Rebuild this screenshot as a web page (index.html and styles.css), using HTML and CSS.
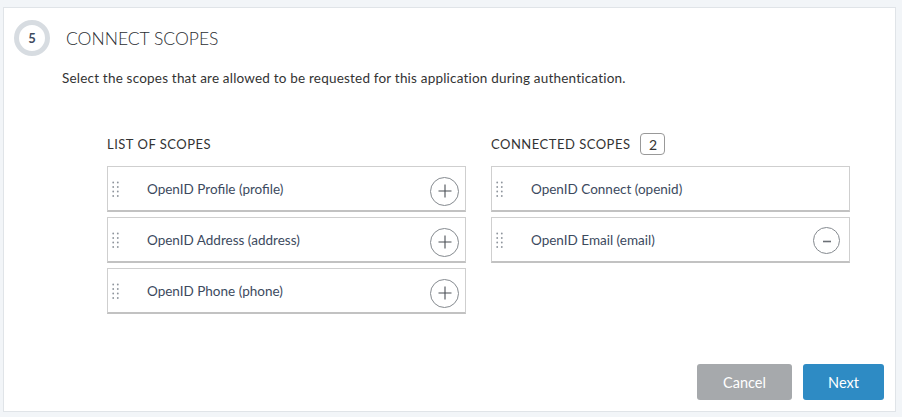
FILE: index.html
```html
<!DOCTYPE html>
<html>
<head>
<meta charset="utf-8">
<link rel="stylesheet" href="styles.css">
</head>
<body>
<div class="card">
  <div class="step-head">
    <div class="step-num">5</div>
    <h1 class="step-title">CONNECT SCOPES</h1>
  </div>
  <p class="desc">Select the scopes that are allowed to be requested for this application during authentication.</p>
  <div class="columns">
    <div class="col">
      <div class="col-head"><span class="col-label">LIST OF SCOPES</span></div>
      <div class="item">
        <svg class="handle" width="8" height="16" viewBox="0 0 8 16"><g fill="#8f959c"><circle cx="1.2" cy="1.5" r="0.9"/><circle cx="5.8" cy="1.5" r="0.9"/><circle cx="1.2" cy="6" r="0.9"/><circle cx="5.8" cy="6" r="0.9"/><circle cx="1.2" cy="10.5" r="0.9"/><circle cx="5.8" cy="10.5" r="0.9"/><circle cx="1.2" cy="15" r="0.9"/><circle cx="5.8" cy="15" r="0.9"/></g></svg>
        <span class="item-name">OpenID Profile (profile)</span>
        <span class="round-btn"><svg width="16" height="16" viewBox="0 0 16 16"><path d="M8 1.5v13M1.5 8h13" stroke="#4a4f55" stroke-width="1.1" fill="none"/></svg></span>
      </div>
      <div class="item">
        <svg class="handle" width="8" height="16" viewBox="0 0 8 16"><g fill="#8f959c"><circle cx="1.2" cy="1.5" r="0.9"/><circle cx="5.8" cy="1.5" r="0.9"/><circle cx="1.2" cy="6" r="0.9"/><circle cx="5.8" cy="6" r="0.9"/><circle cx="1.2" cy="10.5" r="0.9"/><circle cx="5.8" cy="10.5" r="0.9"/><circle cx="1.2" cy="15" r="0.9"/><circle cx="5.8" cy="15" r="0.9"/></g></svg>
        <span class="item-name">OpenID Address (address)</span>
        <span class="round-btn"><svg width="16" height="16" viewBox="0 0 16 16"><path d="M8 1.5v13M1.5 8h13" stroke="#4a4f55" stroke-width="1.1" fill="none"/></svg></span>
      </div>
      <div class="item">
        <svg class="handle" width="8" height="16" viewBox="0 0 8 16"><g fill="#8f959c"><circle cx="1.2" cy="1.5" r="0.9"/><circle cx="5.8" cy="1.5" r="0.9"/><circle cx="1.2" cy="6" r="0.9"/><circle cx="5.8" cy="6" r="0.9"/><circle cx="1.2" cy="10.5" r="0.9"/><circle cx="5.8" cy="10.5" r="0.9"/><circle cx="1.2" cy="15" r="0.9"/><circle cx="5.8" cy="15" r="0.9"/></g></svg>
        <span class="item-name">OpenID Phone (phone)</span>
        <span class="round-btn"><svg width="16" height="16" viewBox="0 0 16 16"><path d="M8 1.5v13M1.5 8h13" stroke="#4a4f55" stroke-width="1.1" fill="none"/></svg></span>
      </div>
    </div>
    <div class="col">
      <div class="col-head"><span class="col-label">CONNECTED SCOPES</span><span class="badge">2</span></div>
      <div class="item">
        <svg class="handle" width="8" height="16" viewBox="0 0 8 16"><g fill="#8f959c"><circle cx="1.2" cy="1.5" r="0.9"/><circle cx="5.8" cy="1.5" r="0.9"/><circle cx="1.2" cy="6" r="0.9"/><circle cx="5.8" cy="6" r="0.9"/><circle cx="1.2" cy="10.5" r="0.9"/><circle cx="5.8" cy="10.5" r="0.9"/><circle cx="1.2" cy="15" r="0.9"/><circle cx="5.8" cy="15" r="0.9"/></g></svg>
        <span class="item-name">OpenID Connect (openid)</span>
      </div>
      <div class="item">
        <svg class="handle" width="8" height="16" viewBox="0 0 8 16"><g fill="#8f959c"><circle cx="1.2" cy="1.5" r="0.9"/><circle cx="5.8" cy="1.5" r="0.9"/><circle cx="1.2" cy="6" r="0.9"/><circle cx="5.8" cy="6" r="0.9"/><circle cx="1.2" cy="10.5" r="0.9"/><circle cx="5.8" cy="10.5" r="0.9"/><circle cx="1.2" cy="15" r="0.9"/><circle cx="5.8" cy="15" r="0.9"/></g></svg>
        <span class="item-name">OpenID Email (email)</span>
        <span class="round-btn minus"><svg width="16" height="16" viewBox="0 0 16 16"><path d="M4 8.5h8" stroke="#6b7076" stroke-width="1.6" fill="none"/></svg></span>
      </div>
    </div>
  </div>
  <div class="footer">
    <button class="btn btn-cancel">Cancel</button>
    <button class="btn btn-next">Next</button>
  </div>
</div>
</body>
</html>
```

FILE: styles.css
```css
html, body {
  margin: 0;
  height: 100%;
}
body {
  background: #f2f5f8;
  padding: 7px 6px 5px 3px;
  box-sizing: border-box;
  font-family: "Lato", "Open Sans", sans-serif;
  color: #333;
}
.card {
  box-sizing: border-box;
  height: 100%;
  background: #fff;
  border: 1px solid #e0e4e8;
  display: flex;
  flex-direction: column;
  padding: 12px 10px 11px 10px;
}
.step-head {
  display: flex;
  align-items: center;
  gap: 16px;
}
.step-num {
  box-sizing: border-box;
  width: 36px;
  height: 36px;
  border-radius: 50%;
  border: 5px solid #d7dce1;
  display: flex;
  align-items: center;
  justify-content: center;
  font-size: 13px;
  font-weight: 700;
  color: #3e4b5e;
}
.step-title {
  margin: 0;
  font-size: 17.5px;
  font-weight: 300;
  color: #2a2e32;
}
.desc {
  margin: 14px 0 0 48px;
  font-size: 13.5px;
  line-height: 16px;
  letter-spacing: 0.2px;
  color: #333;
}
.columns {
  display: flex;
  gap: 25px;
  margin: 47px 0 0 93px;
}
.col {
  width: 359px;
  display: flex;
  flex-direction: column;
  gap: 5px;
}
.col-head {
  height: 22px;
  display: flex;
  align-items: center;
  gap: 10px;
  margin-bottom: 6px;
}
.col-label {
  font-size: 13px;
  letter-spacing: 0.5px;
  color: #333;
}
.badge {
  box-sizing: border-box;
  width: 25px;
  height: 22px;
  border: 1px solid #999;
  border-radius: 4px;
  display: flex;
  align-items: center;
  justify-content: center;
  font-size: 14px;
  color: #333;
}
.item {
  box-sizing: border-box;
  height: 46px;
  border: 1px solid #cfcfcf;
  border-bottom: 2px solid #c2c2c2;
  display: flex;
  align-items: center;
  padding: 0 6px 0 4px;
}
.handle {
  flex: none;
}
.item-name {
  margin-left: 27px;
  flex: 1;
  font-size: 13.5px;
  color: #3c4a5e;
}
.round-btn {
  box-sizing: border-box;
  width: 29px;
  height: 29px;
  border-radius: 50%;
  border: 1px solid #858a8f;
  display: flex;
  align-items: center;
  justify-content: center;
  margin-top: 5px;
}
.round-btn.minus {
  width: 27px;
  height: 27px;
  margin-right: 3px;
  margin-top: 2px;
}
.footer {
  margin-top: auto;
  display: flex;
  justify-content: flex-end;
  gap: 11px;
  margin-right: 1px;
}
.btn {
  height: 36px;
  border: none;
  border-radius: 3px;
  color: #fff;
  font-family: inherit;
  font-size: 14.5px;
  padding: 0;
}
.btn-cancel {
  width: 95px;
  background: #a6a9ac;
}
.btn-next {
  width: 81px;
  background: #2e8bc4;
}
```
